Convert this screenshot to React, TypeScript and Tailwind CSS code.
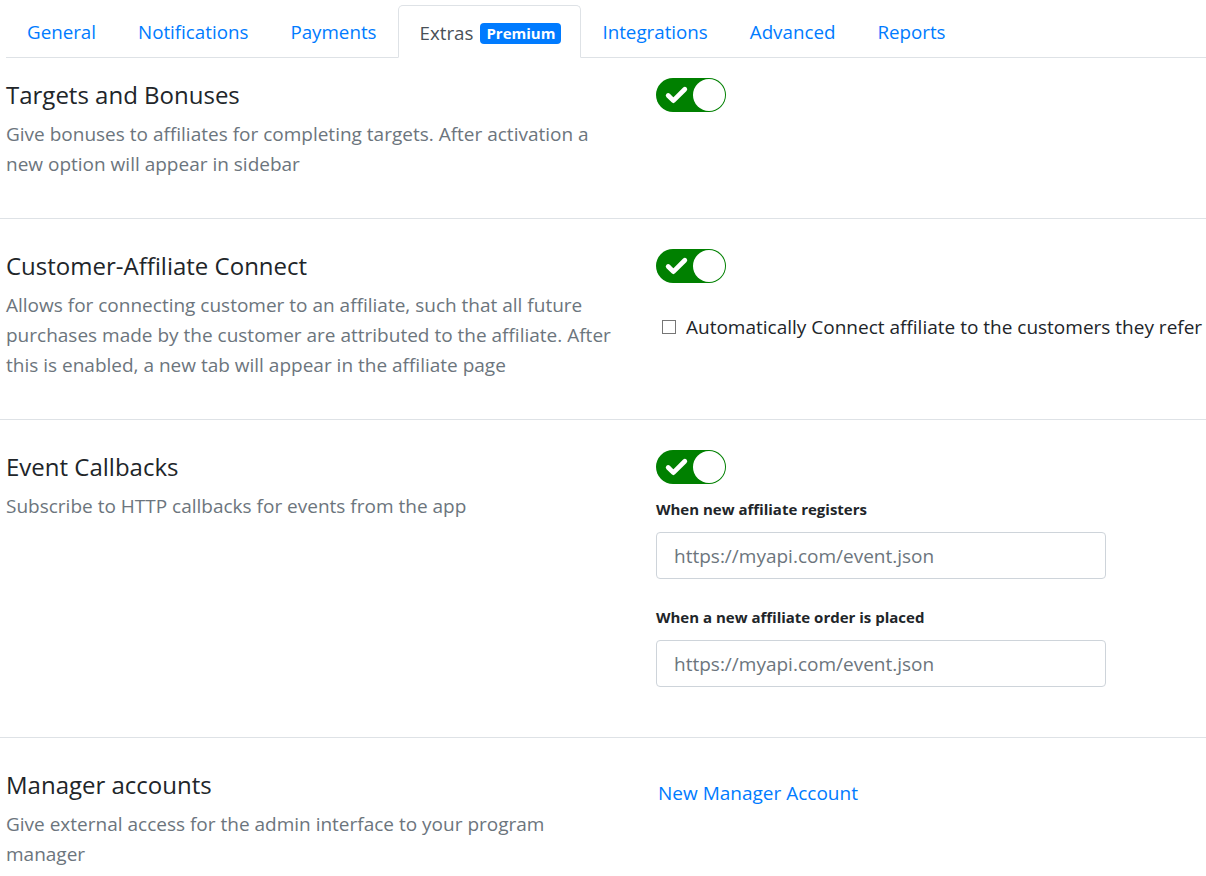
import { Check } from 'lucide-react'

const tabs = ['General', 'Notifications', 'Payments', 'Extras', 'Integrations', 'Advanced', 'Reports']

function Toggle() {
  return (
    <div className="flex h-[34px] w-[70px] items-center rounded-full bg-[#008000] p-px">
      <div className="flex flex-1 items-center justify-center pl-[3px]">
        <Check className="h-[25px] w-[25px] text-white" strokeWidth={4.5} />
      </div>
      <div className="h-[32px] w-[32px] rounded-full bg-white" />
    </div>
  )
}

function Section({
  title,
  desc,
  children,
  pad = 'pb-[39px]',
  top = 'pt-[30px]',
  last = false,
}: {
  title: string
  desc: string[]
  children: React.ReactNode
  pad?: string
  top?: string
  last?: boolean
}) {
  return (
    <section className={`flex ${top} ${pad} ${last ? '' : 'border-b border-[#dee2e6]'}`}>
      <div className="w-[656px] shrink-0 pl-[6px] pr-[30px]">
        <h5 className="text-[24px] leading-[34px] text-[#212529]">{title}</h5>
        <p className="mt-[7px] text-[19px] leading-[30px] text-[#6c757d]">
          {desc.map((l, i) => (
            <span key={i} className="block">
              {l}
            </span>
          ))}
        </p>
      </div>
      <div className="flex-1">{children}</div>
    </section>
  )
}

function UrlField({ label }: { label: string }) {
  return (
    <div>
      <label className="block text-[15px] font-bold leading-[20px] text-[#212529]">{label}</label>
      <input
        className="mt-[13px] block h-[47px] w-[450px] rounded-[4px] border border-[#ced4da] px-[17px] text-[19px] text-[#495057] placeholder:text-[#6c757d] outline-none"
        placeholder="https://myapi.com/event.json"
      />
    </div>
  )
}

export default function App() {
  return (
    <div className="min-h-screen overflow-hidden bg-white font-['Open_Sans',sans-serif]">
      <nav className="ml-[6px] flex h-[58px] items-end border-b border-[#dee2e6]">
        {tabs.map((t) =>
          t === 'Extras' ? (
            <div
              key={t}
              className="-mb-px flex h-[53px] items-center gap-[7px] rounded-t-[5px] border border-b-white border-[#dee2e6] bg-white pl-[21px] pr-[19px] pt-[3px] text-[18.75px] text-[#495057]"
            >
              {t}
              <span className="rounded-[4px] bg-[#007bff] px-[6px] text-[15px] font-bold leading-[21px] text-white">
                Premium
              </span>
            </div>
          ) : (
            <a key={t} href="#" className="flex h-[52px] items-center px-[21px] pt-[3px] text-[18.75px] text-[#007bff]">
              {t}
            </a>
          )
        )}
      </nav>

      <Section
        top="pt-[20px]"
        title="Targets and Bonuses"
        desc={['Give bonuses to affiliates for completing targets. After activation a', 'new option will appear in sidebar']}
      >
        <Toggle />
      </Section>
      <Section
        title="Customer-Affiliate Connect"
        desc={[
          'Allows for connecting customer to an affiliate, such that all future',
          'purchases made by the customer are attributed to the affiliate. After',
          'this is enabled, a new tab will appear in the affiliate page',
        ]}
      >
        <Toggle />
        <label className="mt-[32px] ml-[6px] flex items-center gap-[10px] whitespace-nowrap text-[19px] leading-[24px] text-[#212529]">
          <span className="h-[14px] w-[14px] shrink-0 border border-[#767676] bg-white" />
          Automatically Connect affiliate to the customers they refer
        </label>
      </Section>
      <Section title="Event Callbacks" desc={['Subscribe to HTTP callbacks for events from the app']} pad="pb-[50px]">
        <Toggle />
        <div className="mt-[15px] flex flex-col gap-[28px]">
          <UrlField label="When new affiliate registers" />
          <UrlField label="When a new affiliate order is placed" />
        </div>
      </Section>
      <Section
        last
        pad="pb-[20px]"
        title="Manager accounts"
        desc={['Give external access for the admin interface to your program', 'manager']}
      >
        <div className="pt-[13px] pl-[2px]">
          <a href="#" className="text-[19px] leading-[24px] text-[#007bff]">
            New Manager Account
          </a>
        </div>
      </Section>
    </div>
  )
}
